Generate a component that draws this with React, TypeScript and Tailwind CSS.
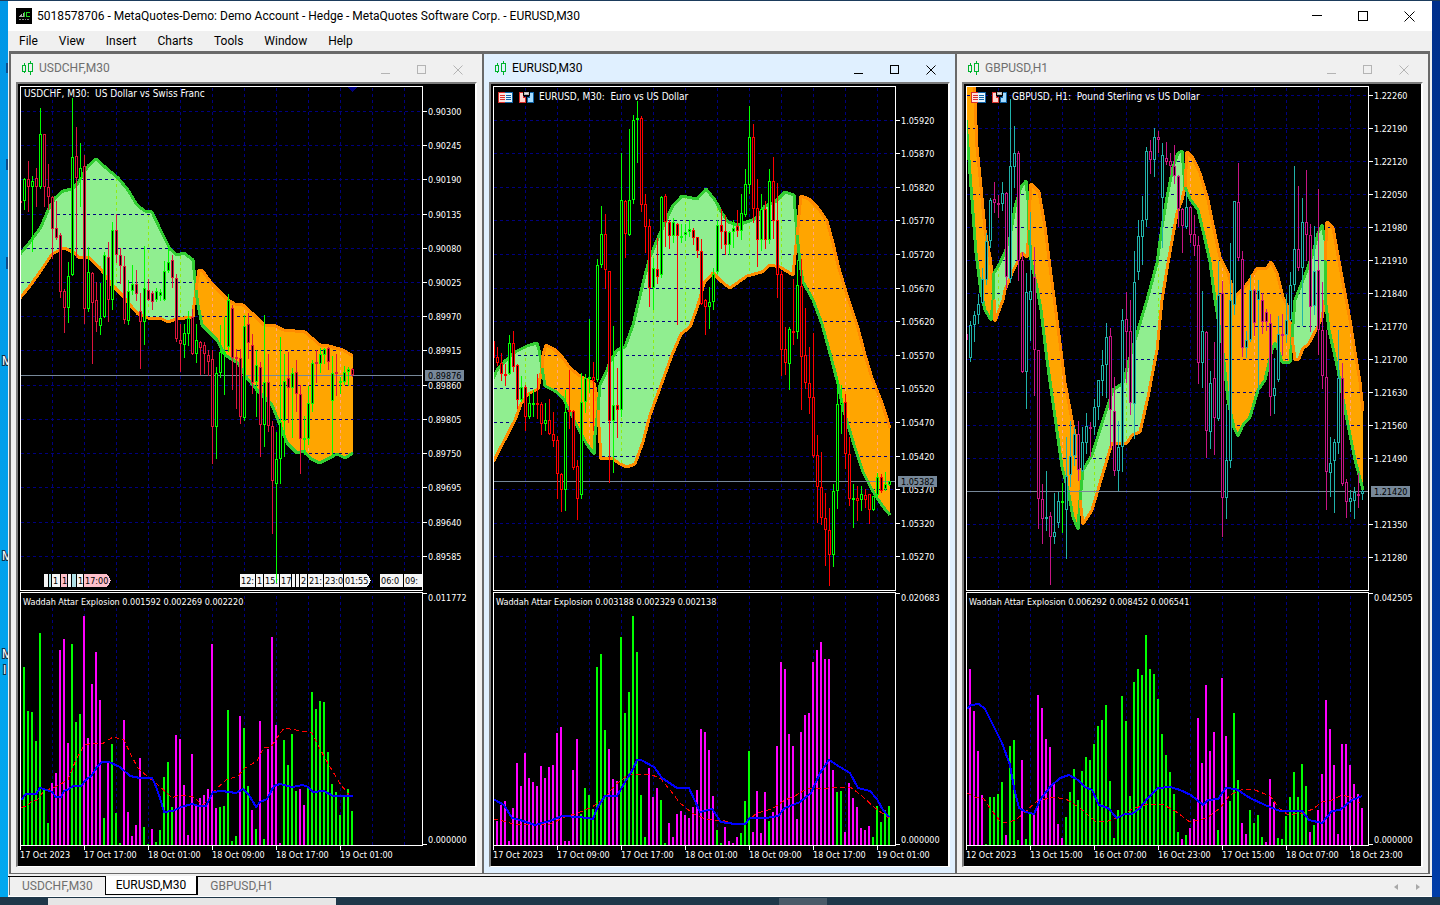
import { Fragment, useId } from 'react';
import clsx from 'clsx';

type Band = { bull: boolean; top: string; bottom: string };
type Flag = { x: number; label?: string; tone?: 'pink' | 'blue' };
type ChartData = {
  symbol: string;
  title: string;
  toolbar: boolean;
  active: boolean;
  left: number;
  firstGrid: number;
  up: string;
  down: string;
  levels: [number, string][];
  price: [number, string];
  dates: string[];
  candles: string;
  bands: Band[];
  flags?: Flag[];
  indicator: string;
  max: string;
  bars: string;
  signal: string;
  deadZone: string;
};

const CANDLE_STEP = 4;
const GRID_STEP = 32;
const MAIN_TOP = 87;
const SUB_TOP = 593;
const BASELINE = 845;

const levels = (ys: number[], start: number, step: number): [number, string][] =>
  ys.map((y, i) => [y, ((start - step * i) / 100000).toFixed(5)]);

// candles: colour, high, body top, body bottom, low
const charts: ChartData[] = [
  {
    symbol: 'USDCHF,M30',
    title: 'USDCHF, M30:  US Dollar vs Swiss Franc',
    toolbar: false,
    active: false,
    left: 21,
    firstGrid: 52,
    up: '#00ff00',
    down: '#dc143c',
    levels: levels([111, 145, 179, 214, 248, 282, 316, 350, 385, 419, 453, 487, 522, 556], 90300, 55),
    price: [375, '0.89876'],
    dates: ['17 Oct 2023', '17 Oct 17:00', '18 Oct 01:00', '18 Oct 09:00', '18 Oct 17:00', '19 Oct 01:00'],
    candles: `r 201 201 202 202|g 178 179 201 209|r 161 179 187 211|g 176 181 187 251|r 168 178 187 206|g 108 134 187 188|r 134 134 187 206
      |r 164 187 197 209|r 196 197 229 258|r 201 228 238 239|r 233 235 292 297|r 289 291 308 332|g 262 276 308 322
      |g 98 157 275 275|r 127 156 178 257|g 143 168 178 206|r 155 166 309 323|g 247 272 309 311|r 272 273 303 363
      |r 282 300 322 331|g 283 318 326 334|g 252 255 317 317|r 242 257 300 321|g 222 230 300 309|r 214 230 255 262
      |r 248 255 266 283|r 256 266 320 323|g 280 291 321 324|g 265 284 291 294|r 270 284 294 300|r 293 311 322 368
      |g 246 288 322 344|r 279 290 300 300|r 291 293 302 309|g 288 291 300 301|g 289 292 296 300|g 261 271 300 300
      |g 246 262 271 272|r 255 260 278 287|r 274 278 339 341|r 324 340 344 371|g 324 333 345 357|g 311 318 334 345
      |r 309 317 354 354|g 324 340 354 362|r 341 342 348 374|r 342 345 354 373|r 350 355 362 375|r 350 359 427 463
      |g 367 373 427 458|g 325 352 373 377|g 317 352 353 394|g 294 300 347 351|r 305 308 358 389|r 349 357 358 408
      |r 349 358 417 423|g 315 326 418 420|r 313 324 343 358|r 334 345 383 393|g 350 365 382 416|r 362 367 425 456
      |g 315 382 425 446|r 354 382 426 431|r 421 426 481 533|g 432 459 484 582|g 337 422 459 483|g 354 381 421 456
      |r 352 378 388 422|g 368 373 388 437|r 360 372 394 411|r 385 394 439 473|g 416 438 439 454|g 386 403 439 444
      |g 360 363 404 411|r 350 362 364 382|g 348 354 364 372|g 348 349 355 363|r 347 348 362 369|g 356 373 401 455
      |r 354 372 374 395|g 377 381 383 393|g 366 372 382 384|g 367 369 372 385|r 368 369 375 376`,
    bands: [
      {
        bull: true,
        top: '20,254 30,242 41,227 48,210 55,198 63,191 72,189 78,183 88,166 96,159 105,167 118,178 128,190 137,205 145,211 152,212 160,229 170,249 177,255 184,253 193,260 196,290',
        bottom: '20,298 30,286 40,272 52,254 64,248 73,252 80,258 88,257 100,268 112,285 124,297 131,306 138,314 148,318 160,318 168,322 176,319 193,317 194,305 196,290',
      },
      {
        bull: false,
        top: '196,290 199,270 202,270 212,284 228,300 235,304 243,305 253,314 264,325 273,325 284,330 305,332 320,345 329,346 343,350 353,356',
        bottom: '196,290 198,305 202,325 217,340 225,355 238,363 246,377 257,390 272,405 278,420 287,443 297,453 304,451 311,459 320,463 337,454 345,458 353,453',
      },
    ],
    flags: [
      { x: 44 }, { x: 49, tone: 'blue' }, { x: 52, label: '1' }, { x: 61, label: '1', tone: 'pink' }, { x: 68 },
      { x: 72, tone: 'blue' }, { x: 77, label: '1' }, { x: 84, label: '17:00', tone: 'pink' },
      { x: 240, label: '12:' }, { x: 256, label: '1' }, { x: 264, label: '15:' }, { x: 280, label: '17' },
      { x: 292 }, { x: 296 }, { x: 300, label: '2' }, { x: 308, label: '21:' }, { x: 324, label: '23:0' },
      { x: 344, label: '01:55' }, { x: 380, label: '06:0' }, { x: 404, label: '09:' },
    ],
    indicator: 'Waddah Attar Explosion 0.001592 0.002269 0.002220',
    max: '0.011772',
    bars: `g178 g134 g133 g104 g212 g55 g22 m62 m72 m195 m206 m102 g201 g123 g131 m229 m107 m161 m193 m145 g27 m82 g101 g32 g2
      m125 m33 m9 m20 m87 g18 g1 m16 g3 g15 g68 g83 g38 m110 m106 m60 m10 m91 m40 m47 m50 m56 m201 m37 g38 g39 g135 g4 g9 m129
      g117 g59 m35 g16 m124 g6 m96 m208 m120 m2 g105 g80 g111 g54 m56 m40 g58 g153 g136 g144 g143 g93 g61 g53 g30 g50 g56 g34`,
    signal: '21,800 26,794 36,794 40,788 47,790 52,792 56,797 61,797 64,791 69,789 73,786 81,786 86,780 92,775 97,767 102,762 109,762 120,767 130,776 140,778 152,778 155,784 160,798 164,812 173,811 181,807 192,804 199,806 206,806 210,798 213,792 222,791 236,793 243,789 249,795 256,807 260,802 267,799 274,786 280,784 292,787 303,785 308,787 313,792 324,791 333,796 353,796',
    deadZone: '21,808 28,805 33,800 37,800 44,791 55,787 68,780 75,762 84,745 94,743 102,744 113,737 124,740 131,755 138,768 148,777 157,784 172,798 179,795 193,797 203,805 208,800 216,789 226,780 238,776 245,768 257,761 264,747 271,747 277,738 284,728 302,731 312,733 320,749 330,767 341,785 350,796',
  },
  {
    symbol: 'EURUSD,M30',
    title: 'EURUSD, M30:  Euro vs US Dollar',
    toolbar: true,
    active: true,
    left: 494,
    firstGrid: 525,
    up: '#00ff00',
    down: '#ff0000',
    levels: levels([120, 153, 187, 220, 254, 288, 321, 355, 388, 422, 456, 489, 523, 556], 105920, 50),
    price: [481, '1.05382'],
    dates: ['17 Oct 2023', '17 Oct 09:00', '17 Oct 17:00', '18 Oct 01:00', '18 Oct 09:00', '18 Oct 17:00', '19 Oct 01:00'],
    candles: `r 341 341 358 358|r 347 357 363 365|r 353 363 374 380|r 364 374 376 385|g 335 343 374 374|r 331 343 367 371|r 364 365 400 408
      |g 376 387 400 401|r 385 387 417 430|g 393 403 417 418|g 390 403 404 416|r 374 403 405 418|r 402 404 424 434
      |g 403 420 424 430|r 399 420 434 434|r 412 434 441 446|r 436 440 474 498|r 473 474 490 511|g 390 412 490 510
      |r 370 410 412 428|r 410 411 468 469|r 460 466 499 519|g 373 402 495 498|g 374 378 402 412|g 319 377 379 392
      |r 362 377 381 430|g 259 265 380 381|g 206 234 265 267|r 214 234 270 288|r 271 271 421 482|g 326 405 421 472
      |r 368 405 410 437|g 153 200 410 416|r 200 201 234 257|g 129 200 235 235|g 115 120 200 203|g 101 118 120 162
      |r 116 118 205 211|r 194 204 227 252|r 219 226 288 306|g 258 268 288 309|r 238 269 277 283|g 196 197 275 277
      |r 194 196 222 246|r 220 222 236 248|g 218 222 236 242|r 223 224 236 324|g 224 236 237 242|g 224 232 235 240
      |g 220 229 232 236|r 228 230 238 244|r 237 237 251 257|r 239 251 304 304|r 299 300 307 334|g 287 302 307 328
      |g 268 274 302 309|g 220 225 272 273|r 209 225 232 248|r 215 231 245 254|g 231 232 245 254|g 220 228 232 247
      |r 210 226 231 236|g 194 213 231 239|g 169 184 215 216|g 106 137 185 193|r 124 137 209 222|r 179 208 240 266
      |g 194 209 240 250|r 201 209 240 248|g 169 181 240 243|r 157 181 221 238|r 183 220 275 297|r 271 274 350 375
      |r 327 349 363 374|g 327 329 364 389|r 279 331 332 344|g 260 285 332 338|r 259 286 357 409|r 308 355 383 388
      |r 347 383 398 413|r 333 397 456 457|r 435 455 487 522|r 452 487 518 524|r 493 518 530 565|r 508 530 555 585
      |g 484 491 555 566|g 377 404 491 508|g 385 402 405 433|r 394 402 454 468|r 437 454 499 505|g 484 498 499 527
      |r 486 498 501 520|g 486 494 500 510|r 489 495 500 507|r 494 494 510 523|g 496 496 510 510|g 473 477 495 496
      |r 474 477 491 492|g 472 484 489 490|g 481 481 485 485`,
    bands: [
      {
        bull: true,
        top: '492,381 497,370 505,361 515,352 527,346 537,343 539,350 542,368',
        bottom: '492,464 503,443 515,420 521,404 528,394 538,389 542,368',
      },
      {
        bull: false,
        top: '542,368 543,355 546,345 554,349 563,358 570,368 580,376 588,380 594,383 596,392 598,410',
        bottom: '542,368 545,386 555,391 563,398 568,408 577,426 586,443 594,454 595,435 598,410',
      },
      {
        bull: true,
        top: '598,410 600,385 607,370 610,362 617,350 625,347 633,325 639,300 645,275 650,257 658,238 664,225 672,207 682,196 697,199 706,189 715,200 722,213 728,222 738,225 755,219 765,206 775,202 785,192 794,195 797,235',
        bottom: '598,410 601,459 612,458 620,464 627,467 635,464 643,442 650,415 660,388 672,355 681,334 690,327 697,308 700,298 704,283 713,273 722,282 730,288 740,281 747,276 762,272 770,265 780,267 793,275 797,235',
      },
      {
        bull: false,
        top: '797,240 799,215 801,196 809,199 818,208 827,221 833,243 838,265 846,292 852,310 858,328 865,355 872,378 882,403 890,428',
        bottom: '797,235 801,270 803,282 813,300 822,324 831,357 838,384 843,408 848,425 855,448 863,472 871,488 877,498 884,508 890,515',
      },
    ],
    indicator: 'Waddah Attar Explosion 0.003188 0.002329 0.002138',
    max: '0.020683',
    bars: `m24 m40 m44 m4 m37 m82 m59 m92 m67 m63 m59 m79 m67 m78 m80 m112 m118 m4 m4 m75 m106 g31 g57 g50 g36 g178 g191 g115 m96
      m66 m64 g208 g132 g153 g229 g193 g50 g8 m77 m48 m57 g45 g2 m22 m8 m31 m34 m30 m27 m38 m55 m116 m113 m95 m49 g15 g2 m18 m4
      m2 m8 g12 g44 g94 m13 m54 m12 m53 g24 m33 m99 m183 m176 m111 m99 m26 m113 m130 m132 m183 m195 m203 m186 m186 m75 g53 g54
      m13 m62 m47 m38 m17 m15 m19 g8 g39 g23 g35 g39`,
    signal: '493,799 504,805 512,818 520,820 535,825 550,821 562,816 580,817 593,819 597,808 605,796 617,796 625,782 633,769 637,760 641,760 654,767 662,778 677,788 689,788 700,812 712,809 721,822 735,824 745,824 750,818 766,818 778,816 785,808 800,802 811,793 820,773 829,760 840,767 850,773 858,788 870,791 877,799 883,810 889,817',
    deadZone: '493,819 503,821 513,824 536,825 550,824 565,817 578,813 592,807 606,797 615,785 628,775 650,774 661,779 670,790 680,803 692,813 705,819 725,821 735,824 745,823 757,813 772,809 785,800 795,796 808,788 828,788 850,787 862,796 875,808 889,818',
  },
  {
    symbol: 'GBPUSD,H1',
    title: 'GBPUSD, H1:  Pound Sterling vs US Dollar',
    toolbar: true,
    active: false,
    left: 967,
    firstGrid: 998,
    up: '#20b2aa',
    down: '#c71585',
    levels: levels([95, 128, 161, 194, 227, 260, 293, 326, 359, 392, 425, 458, 491, 524, 557], 122260, 70),
    price: [491, '1.21420'],
    dates: ['12 Oct 2023', '13 Oct 15:00', '16 Oct 07:00', '16 Oct 23:00', '17 Oct 15:00', '18 Oct 07:00', '18 Oct 23:00'],
    candles: `r 334 334 340 340|g 321 325 358 361|g 311 315 325 341|g 294 304 315 323|g 268 279 303 303|g 233 241 280 284|g 198 200 241 247
      |r 182 199 203 212|r 195 203 205 217|g 182 193 204 210|r 192 193 277 288|g 99 166 279 282|g 126 153 167 187
      |r 151 153 261 280|r 252 260 372 372|g 273 292 372 408|g 212 291 300 340|r 247 277 350 395|r 350 350 499 528
      |r 484 499 519 543|g 471 517 519 530|r 512 516 537 584|g 493 532 537 543|g 492 501 523 527|l 483 501 502 532
      |g 437 476 510 558|g 421 456 475 486|g 427 434 456 465|r 421 434 470 480|g 427 442 471 471|g 413 426 443 453
      |r 422 427 428 456|g 399 407 427 434|g 380 380 407 419|g 350 365 381 395|g 323 337 365 397|r 328 336 410 447
      |r 377 411 471 475|g 421 447 471 490|g 309 320 447 471|r 292 319 332 382|r 300 331 403 414|g 251 282 404 438
      |g 220 236 272 279|g 196 220 237 264|g 147 151 220 226|r 140 151 160 173|g 128 137 160 176|r 131 137 140 152
      |g 143 155 198 247|r 142 158 162 164|r 153 161 166 174|r 145 166 176 183|r 175 176 209 226|r 208 209 226 252
      |g 191 207 227 228|r 206 207 235 242|r 215 234 246 255|r 236 245 363 383|g 291 331 363 387|r 331 332 431 457
      |g 371 383 432 448|r 342 378 418 454|g 261 295 419 420|r 281 293 498 536|g 404 460 498 518|g 243 300 461 467
      |g 201 201 305 314|r 163 202 258 260|r 251 259 348 356|g 331 340 348 357|g 275 290 340 341|r 289 290 323 335
      |g 280 290 300 392|r 293 300 322 333|r 309 312 322 330|r 314 323 397 415|g 358 388 396 413|g 316 334 380 381
      |r 314 334 335 355|g 294 320 335 342|g 272 285 320 320|g 166 249 285 290|r 186 249 268 270|g 198 222 268 325
      |r 170 222 235 260|r 224 235 307 331|g 226 271 306 314|r 189 270 330 354|r 282 330 376 388|r 330 377 472 509
      |g 437 463 473 496|g 439 442 461 512|g 330 378 443 453|r 363 378 484 485|r 479 482 502 517|g 490 498 502 511
      |g 487 492 501 518|r 473 494 495 507|g 490 491 494 499`,
    bands: [
      {
        bull: false,
        top: '966,80 974,80 977,147 981,187 985,230 990,257 993,280 994,300',
        bottom: '966,120 972,200 976,253 981,293 985,310 991,320 993,300',
      },
      {
        bull: true,
        top: '993,300 994,273 1000,263 1005,252 1010,237 1015,207 1021,187 1026,181 1028,200 1029,230',
        bottom: '994,300 995,321 1003,300 1005,290 1012,273 1022,253 1027,257 1029,230',
      },
      {
        bull: false,
        top: '1029,230 1030,200 1031,184 1039,192 1045,227 1050,267 1054,297 1060,343 1065,383 1072,420 1077,443 1080,480 1080,500',
        bottom: '1029,230 1031,260 1038,293 1041,310 1047,360 1055,417 1062,467 1068,490 1073,517 1078,529 1080,500',
      },
      {
        bull: true,
        top: '1080,500 1083,470 1092,455 1103,420 1113,390 1123,383 1130,357 1138,330 1147,300 1157,263 1162,227 1167,197 1173,167 1178,153 1182,151 1185,187',
        bottom: '1080,500 1083,524 1092,510 1103,473 1112,443 1127,443 1132,435 1140,432 1148,397 1157,350 1162,300 1168,263 1177,213 1182,200 1185,187',
      },
      {
        bull: false,
        top: '1185,187 1187,152 1193,158 1200,173 1208,200 1213,225 1220,257 1228,273 1235,297 1248,283 1257,268 1266,269 1271,262 1277,273 1283,297 1288,307 1292,337',
        bottom: '1185,187 1190,199 1198,210 1204,235 1210,262 1215,300 1222,343 1228,400 1234,428 1238,436 1243,425 1250,417 1258,390 1265,380 1272,350 1275,343 1279,352 1282,362 1290,362 1292,337',
      },
      {
        bull: true,
        top: '1292,337 1295,300 1307,270 1313,253 1318,233 1322,225 1325,240 1325,260',
        bottom: '1292,337 1295,360 1299,359 1303,348 1308,345 1317,328 1322,318 1325,300 1325,260',
      },
      {
        bull: false,
        top: '1325,260 1327,222 1333,228 1337,250 1343,283 1350,320 1355,352 1360,382 1363,411',
        bottom: '1325,260 1326,305 1329,330 1338,370 1345,410 1355,460 1363,490',
      },
    ],
    indicator: 'Waddah Attar Explosion 0.006292 0.008452 0.006541',
    max: '0.042505',
    bars: `m176 m134 m94 m50 g1 g48 g48 g51 g63 m10 g99 g105 g5 m85 g6 g31 m31 m150 m137 m106 m98 m61 m21 m7 g28 g53 g76 g45 g74 g88
      g85 g101 g119 g125 g140 g64 g7 g35 g149 g124 g49 g163 g176 g170 g210 g176 g171 g146 g111 g90 g73 g51 g13 m6 g10 m17 m26
      m127 m82 m160 m94 m113 g15 m167 m109 g44 g132 g65 m22 m11 g35 g22 g30 g8 m3 m66 m43 g7 g6 g29 g48 g73 g48 g81 g59 m13 g20
      m35 m71 m145 m116 m80 m11 m101 m101 m80 m61 m51 m37`,
    signal: '967,709 971,705 979,704 985,709 993,725 1002,743 1010,765 1014,788 1019,808 1026,812 1034,814 1040,800 1050,787 1060,778 1069,775 1078,780 1085,787 1092,790 1099,805 1108,808 1117,818 1125,814 1132,814 1140,808 1147,799 1158,788 1170,787 1180,790 1191,795 1203,805 1208,800 1218,799 1226,788 1236,789 1250,798 1265,805 1280,811 1302,811 1309,820 1322,823 1332,811 1340,810 1352,800 1362,796',
    deadZone: '967,793 975,797 984,799 992,811 1000,821 1006,823 1015,820 1022,815 1036,802 1052,797 1066,799 1080,808 1095,821 1108,821 1122,816 1132,809 1145,805 1162,804 1175,811 1190,822 1207,818 1220,808 1230,795 1243,789 1255,790 1270,796 1280,809 1288,815 1303,813 1313,809 1322,802 1332,800 1342,795 1350,797 1360,803',
  },
];

const bandPolygon = (band: Band) => `${band.top} ${band.bottom.split(' ').reverse().join(' ')}`;

function Candles({ chart }: { chart: ChartData }) {
  const colors: Record<string, string> = { g: chart.up, r: chart.down, l: '#00ff00' };
  return (
    <g fill="#000">
      {chart.candles.split('|').map((candle, i) => {
        const [tone, ...values] = candle.trim().split(' ');
        const [high, top, bottom, low] = values.map(Number);
        // the oldest candle is half hidden behind the left edge
        const x = chart.left - 1 + i * CANDLE_STEP;
        return (
          <Fragment key={i}>
            <path d={`M${x + 0.5} ${high}V${low + 1}`} stroke={colors[tone]} />
            <rect
              x={x - 0.5}
              y={top + 0.5}
              width={2}
              height={Math.max(bottom - top - 1, 1)}
              stroke={colors[tone]}
            />
          </Fragment>
        );
      })}
    </g>
  );
}

const flagFill = { pink: '#ffc0cb', blue: '#b0e0e6', white: '#f5f5f5' };

function MainPane({ chart }: { chart: ChartData }) {
  const clipId = useId();
  const columns = Array.from({ length: 12 }, (_, i) => chart.firstGrid + i * GRID_STEP);
  const verticals = columns.map((x) => `M${x + 0.5} 88V588`).join('');
  const horizontals = chart.levels.map(([y]) => `M${chart.left} ${y + 0.5}h401`).join('');

  return (
    <svg className="block h-[503px] w-full" shapeRendering="crispEdges" fill="none">
      <g transform={`translate(${-chart.left} ${-MAIN_TOP})`}>
        <path d={verticals} stroke="#000080" strokeDasharray="3 3" />
        {chart.bands.map((band, i) => (
          <Fragment key={i}>
            <clipPath id={`${clipId}-${i}`}>
              <polygon points={bandPolygon(band)} />
            </clipPath>
            <polygon points={bandPolygon(band)} fill={band.bull ? '#90ee90' : '#ffa500'} />
            <path
              d={verticals}
              clipPath={`url(#${clipId}-${i})`}
              stroke={band.bull ? '#90ee10' : '#ffa580'}
              strokeDasharray="3 3"
            />
          </Fragment>
        ))}
        <path d={horizontals} stroke="#000080" strokeDasharray="3 3" />
        {chart.bands.map((band, i) => (
          <g key={i} strokeWidth={3} strokeLinejoin="round">
            <polyline points={band.bull ? band.bottom : band.top} stroke="#ff8c00" />
            <polyline points={band.bull ? band.top : band.bottom} stroke="#32cd32" />
          </g>
        ))}
        {chart.flags?.map((flag) => (
          <g key={flag.x}>
            <path
              d={`M${flag.x - 0.5} 573.5v14h24l4 -7l-4 -7z`}
              fill={flagFill[flag.tone ?? 'white']}
              stroke="#000"
            />
            {flag.label && (
              <text x={flag.x + 1} y={584} fill="#000">
                {flag.label}
              </text>
            )}
          </g>
        ))}
        {chart.flags && <path d="M348 87h9l-4.500 5z" fill="#000080" />}
        <path d={`M${chart.left} ${chart.price[0] + 0.5}h401`} stroke="#778899" />
        <Candles chart={chart} />
      </g>
    </svg>
  );
}

function IndicatorPane({ chart }: { chart: ChartData }) {
  const verticals = Array.from(
    { length: 12 },
    (_, i) => `M${chart.firstGrid + i * GRID_STEP + 0.5} 596V845`
  ).join('');

  return (
    <svg className="block h-[252px] w-full" shapeRendering="crispEdges" fill="none">
      <g transform={`translate(${-chart.left} ${-SUB_TOP})`}>
        <path d={verticals} stroke="#000080" strokeDasharray="3 3" />
        {chart.bars.split(/\s+/).map((bar, i) => {
          const height = Number(bar.slice(1));
          return (
            <rect
              key={i}
              x={chart.left + 2 + i * CANDLE_STEP}
              y={BASELINE - height}
              width={2}
              height={height}
              fill={bar[0] === 'g' ? '#00ff00' : '#ff00ff'}
            />
          );
        })}
        <polyline points={chart.deadZone} stroke="#ff0000" strokeDasharray="5 3" />
        <polyline points={chart.signal} stroke="#0000ff" strokeWidth={2} />
      </g>
    </svg>
  );
}

function PriceAxis({ chart }: { chart: ChartData }) {
  const [price, label] = chart.price;
  return (
    <svg className="block h-[505px] w-full" fill="#fff">
      <g transform="translate(0 -86)">
        {chart.levels
          .filter(([y]) => y !== price)
          .map(([y, text]) => (
            <Fragment key={y}>
              <rect y={y} width={4} height={1} />
              <text x={5} y={y + 4}>
                {text}
              </text>
            </Fragment>
          ))}
        <rect x={2} y={price - 5} width={39} height={11} fill="#778899" />
        <text x={5} y={price + 4} fill="#000">
          {label}
        </text>
      </g>
    </svg>
  );
}

function TimeAxis({ chart }: { chart: ChartData }) {
  return (
    <svg className="block h-5 w-full" fill="#fff">
      {chart.dates.map((date, i) => (
        <Fragment key={date}>
          <rect x={i * GRID_STEP * 2 + 2} width={1} height={4} />
          <text x={i * GRID_STEP * 2 + 2} y={12}>
            {date}
          </text>
        </Fragment>
      ))}
    </svg>
  );
}

function DepthIcon() {
  return (
    <svg width="15" height="11" shapeRendering="crispEdges" aria-hidden="true">
      <path d="M0 0h8v11H0z" fill="#d9302c" />
      <path d="M1 1h6v9H1z" fill="#ffe1dc" />
      <path d="M2 3h5v1H2zM2 5h5v1H2zM2 7h5v1H2z" fill="#d9302c" />
      <path d="M7 0h8v11H7z" fill="#0f63a6" />
      <path d="M7 1h7v9H7z" fill="#e3f4ff" />
      <path d="M8 3h5v1H8zM8 5h5v1H8zM8 7h5v1H8z" fill="#0f63a6" />
    </svg>
  );
}

function TradeIcon() {
  return (
    <svg width="15" height="11" shapeRendering="crispEdges" aria-hidden="true">
      <path d="M0 0h5v5h2v6H0z" fill="#d9302c" />
      <path d="M1 1h3v5h2v4H1z" fill="#ffd6d0" />
      <path d="M10 0h5v11H8V5h2z" fill="#0f63a6" />
      <path d="M11 1h3v9H9V6h2z" fill="#a5dcff" />
      <path d="M4 0h7v4H4z" fill="#000" />
      <path d="M5 0h5v3H5z" fill="#b8b8b8" />
      <path d="M6 1h3v1H6z" fill="#e8e8e8" />
    </svg>
  );
}

function CandlesIcon() {
  return (
    <svg width="12" height="14" fill="none" stroke="#00b32d" shapeRendering="crispEdges" aria-hidden="true">
      <path d="M.5 4.500h3v6h-3zM2.500 2v2M2.500 11v1M6.500 2.500h4v8h-4zM8.500 0v2M8.500 11v3" />
    </svg>
  );
}

function WindowControls({ size, className }: { size: number; className: string }) {
  const s = size;
  return (
    <>
      <button type="button" aria-label="Minimize" className={className}>
        <svg width={s} height={s} stroke="currentColor" shapeRendering="crispEdges">
          <path d={s === 11 ? 'M0 4.500h10' : 'M0 8.500h9'} />
        </svg>
      </button>
      <button type="button" aria-label="Maximize" className={className}>
        <svg width={s} height={s} fill="none" stroke="currentColor" shapeRendering="crispEdges">
          <rect x=".5" y=".5" width={s - 2} height={s - 2} />
        </svg>
      </button>
      <button type="button" aria-label="Close" className={className}>
        <svg width={s} height={s} stroke="currentColor">
          <path d={s === 11 ? 'M.5 .5l10 10M10.500 .5l-10 10' : 'M.5 .5l9 9M9.500 .5l-9 9'} />
        </svg>
      </button>
    </>
  );
}

function ChartWindow({ chart }: { chart: ChartData }) {
  return (
    <section
      className={clsx(
        'flex min-w-0 flex-1 flex-col pr-[5px] pb-1.5 pl-[5px]',
        chart.active ? 'bg-[#e0f0ff]' : 'bg-[#f0f0f0]'
      )}
    >
      <header className="flex h-7 items-center pr-px pl-1.5">
        <CandlesIcon />
        <h2 className={clsx('ml-[5px] flex-1 text-xs', chart.active ? 'text-black' : 'text-[#6f6f6f]')}>
          {chart.symbol}
        </h2>
        <WindowControls
          size={10}
          className={clsx('flex h-7 w-9 items-center justify-center pt-1', chart.active ? 'text-black' : 'text-[#b4b4b4]')}
        />
      </header>

      <div className="border-t-2 border-r-2 border-b border-l-2 border-t-[#7c7c7c] border-r-white border-b-white border-l-[#7c7c7c] bg-black pt-0.5 font-['DejaVu_Sans_Condensed','Noto_Sans',sans-serif] text-[9px] leading-3 whitespace-pre text-white">
        <div className="flex pl-0.5">
          <div className="relative min-w-0 flex-1 border border-white">
            <MainPane chart={chart} />
            <div
              className={clsx(
                'absolute flex items-center text-[10px]',
                chart.toolbar ? 'top-1 left-1' : 'top-px left-[3px]'
              )}
            >
              {chart.toolbar && (
                <div className="mr-[5px] flex gap-1.5">
                  <DepthIcon />
                  <TradeIcon />
                </div>
              )}
              <span>{chart.title}</span>
            </div>
          </div>
          <div className="w-[52px]">
            <PriceAxis chart={chart} />
          </div>
        </div>
        <div className="mt-px flex pl-0.5">
          <div className="relative min-w-0 flex-1 border border-white">
            <IndicatorPane chart={chart} />
            <span className="absolute top-[3px] left-0.5 bg-black">{chart.indicator}</span>
          </div>
          <div className="flex w-[52px] flex-col justify-between">
            <div className="mt-px border-t border-black">
              <div className="-mt-px w-1 border-t border-white" />
              <div className="pl-[5px] leading-[9px]">{chart.max}</div>
            </div>
            <div>
              <div className="pl-[5px] leading-[8px]">0.000000</div>
              <div className="mb-px w-1 border-b border-white" />
            </div>
          </div>
        </div>
        <TimeAxis chart={chart} />
      </div>
    </section>
  );
}

function AppIcon() {
  return (
    <svg width="16" height="16" shapeRendering="crispEdges" aria-hidden="true">
      <rect width="16" height="16" fill="#000" />
      <path d="M3 8h1V7h1V6h1v2h1V5h1v4H3z" fill="#a8a8a8" />
      <path d="M8 4h1v5H8zM10 4h4v1h-3v3h3v1h-4z" fill="#22d822" />
      <path d="M3 11h2v1H3zM6 11h2v1H6zM9 11h1v1H9zM11 11h2v1h-2z" fill="#8a8a8a" />
    </svg>
  );
}

// slivers of the desktop shortcuts that peek out beside the window
function DesktopEdge() {
  return (
    <div className="w-2 shrink-0 bg-gradient-to-b from-[#0096e6] to-[#00a8f0]">
      <svg className="block h-[700px] w-full" aria-hidden="true">
        <g fill="#0a4f8f">
          <rect x="6" y="62" width="2" height="10" />
          <rect x="6" y="158" width="2" height="11" />
          <rect x="6" y="256" width="2" height="12" />
        </g>
        <g className="text-xs" fill="#fff" stroke="#12324a" strokeWidth="2" paintOrder="stroke">
          <text x="2" y="364">
            M
          </text>
          <text x="2" y="559">
            M
          </text>
          <text x="2" y="657">
            M
          </text>
          <text x="3" y="673">
            I
          </text>
        </g>
      </svg>
    </div>
  );
}

const menu = ['File', 'View', 'Insert', 'Charts', 'Tools', 'Window', 'Help'];

export default function App() {
  return (
    <div className="flex min-h-screen flex-col bg-[#1f3749] font-[Roboto,sans-serif] text-xs text-black">
      <div className="flex border-t border-[#1b3b5c]">
        <DesktopEdge />
        <main className="min-w-0 flex-1 bg-[#f0f0f0]">
          <header className="flex h-[30px] items-center bg-white pl-2">
            <AppIcon />
            <h1 className="ml-[5px] flex-1 text-xs">
              5018578706 - MetaQuotes-Demo: Demo Account - Hedge - MetaQuotes Software Corp. - EURUSD,M30
            </h1>
            <WindowControls size={11} className="flex h-[30px] w-[46px] items-center justify-center" />
          </header>

          <nav className="flex h-5 items-center gap-px pl-px">
            {menu.map((item) => (
              <button key={item} type="button" className="px-2.5">
                {item}
              </button>
            ))}
          </nav>

          <div className="mr-0.5 ml-px flex gap-0.5 border-t-[3px] border-r border-b border-l-2 border-[#696969] bg-[#696969] pr-px">
            {charts.map((chart) => (
              <ChartWindow key={chart.symbol} chart={chart} />
            ))}
          </div>

          <div className="mt-0.5 flex h-[21px] items-start justify-between border-t border-b border-t-black border-b-white pr-2.5">
            <div className="ml-px flex border-l border-[#696969]">
              {charts.map((chart) => (
                <button
                  key={chart.symbol}
                  type="button"
                  className={clsx(
                    'h-[18px] leading-[18px]',
                    chart.active
                      ? '-mt-px box-content border-r-2 border-b border-l border-black bg-white px-2.5 text-black'
                      : 'px-3 text-[#6f6f6f]'
                  )}
                >
                  {chart.symbol}
                </button>
              ))}
            </div>
            <div className="flex h-5 items-center gap-3 text-[#a8a8a8]">
              <button type="button" aria-label="Scroll tabs left">
                <svg width="9" height="8" fill="currentColor">
                  <path d="M6 1v6L2 4z" />
                </svg>
              </button>
              <button type="button" aria-label="Scroll tabs right">
                <svg width="9" height="8" fill="currentColor">
                  <path d="M3 1v6l4-3z" />
                </svg>
              </button>
            </div>
          </div>
        </main>
        <div className="w-2 shrink-0 bg-gradient-to-b from-[#00308c] to-[#003da8]" />
      </div>

      <footer className="flex flex-1 pt-px pl-12">
        <div className="w-72 bg-[#e6e6e6]" />
        <div className="ml-[443px] w-12 bg-[#4a5a68]" />
      </footer>
    </div>
  );
}
